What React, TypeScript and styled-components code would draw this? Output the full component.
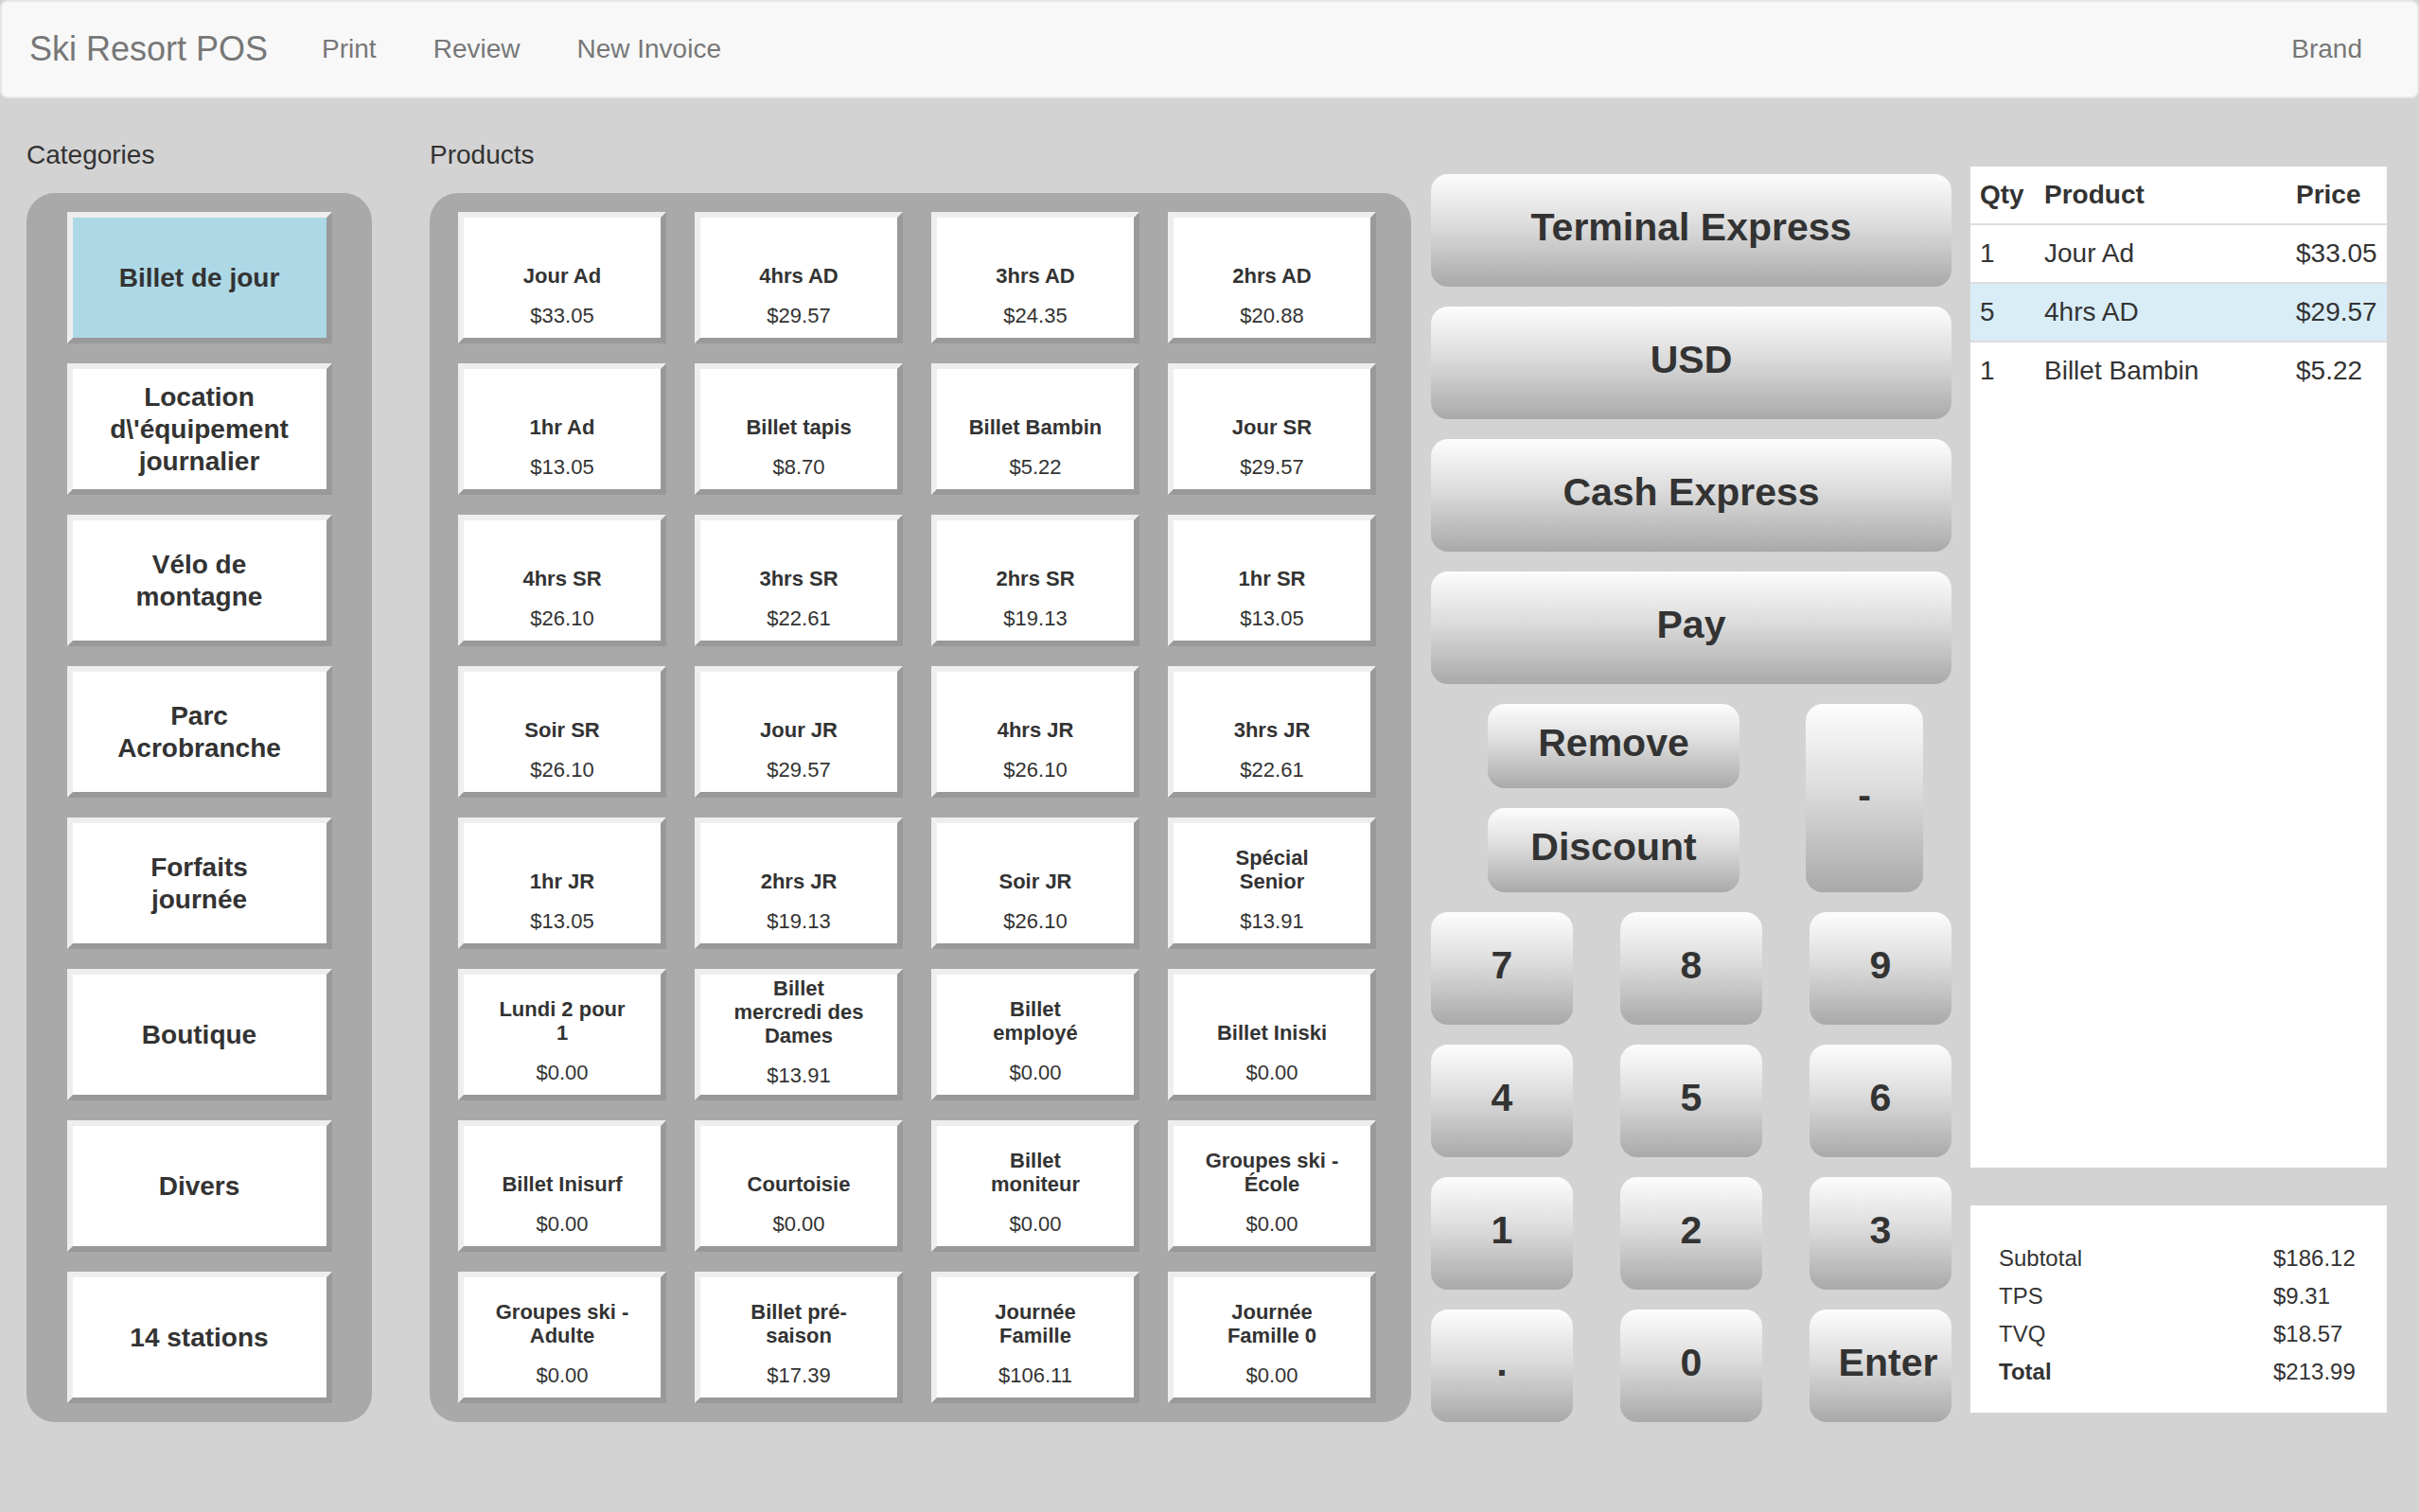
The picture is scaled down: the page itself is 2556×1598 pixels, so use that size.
import React from "react";
import styled, { createGlobalStyle } from "styled-components";

const GlobalStyle = createGlobalStyle`
  html, body {
    margin: 0;
    padding: 0;
    background: #d3d3d3;
    min-height: 100%;
  }
  body {
    font-family: "Liberation Sans", Arial, Helvetica, sans-serif;
    color: #333;
    font-size: 28px;
  }
  * {
    box-sizing: border-box;
  }
`;

const Page = styled.div`
  min-height: 1598px;
  background: #d3d3d3;
`;

const Navbar = styled.nav`
  display: flex;
  align-items: center;
  height: 104px;
  padding: 0 28px 0 29px;
  background: #f8f8f8;
  border: 2px solid #e7e7e7;
  border-radius: 8px;
`;

const Brand = styled.span`
  font-size: 36px;
  color: #777;
  margin-right: 27px;
`;

const NavLink = styled.span`
  font-size: 28px;
  color: #777;
  padding: 0 30px;
`;

const Spacer = styled.div`
  flex: 1;
`;

const Main = styled.div`
  display: flex;
  align-items: flex-start;
  margin-top: 40px;
  padding: 0 34px 0 28px;
`;

const Column = styled.div<{ $width: number; $gap: number; $top?: number }>`
  width: ${({ $width }) => $width}px;
  margin-left: ${({ $gap }) => $gap}px;
  padding-top: ${({ $top }) => $top ?? 0}px;
  flex-shrink: 0;
`;

const Label = styled.div`
  font-size: 28px;
  line-height: 40px;
  margin-bottom: 20px;
  color: #333;
`;

const Panel = styled.div<{ $cols: number }>`
  background: #a9a9a9;
  border-radius: 30px;
  display: grid;
  grid-template-columns: ${({ $cols }) =>
    $cols === 1 ? "280px" : `repeat(${$cols}, 220px)`};
  justify-content: ${({ $cols }) => ($cols === 1 ? "center" : "start")};
  column-gap: 30px;
  row-gap: 21px;
  padding: ${({ $cols }) => ($cols === 1 ? "20px 0" : "20px 37px 20px 30px")};
`;

const Tile = styled.div<{ $active?: boolean }>`
  height: 139px;
  border-style: solid;
  border-width: 6px;
  border-color: #eeeeee #999999 #999999 #eeeeee;
  background: ${({ $active }) => ($active ? "#add8e6" : "#ffffff")};
  font-weight: bold;
  color: #333;
  text-align: center;
`;

const CategoryTile = styled(Tile)`
  display: flex;
  align-items: center;
  justify-content: center;
  padding: 0 34px;
  font-size: 28px;
  line-height: 34px;
`;

const ProductTile = styled(Tile)`
  display: flex;
  flex-direction: column;
  padding: 2px 31px 0;
  font-size: 22px;
  line-height: 25px;
`;

const ProductName = styled.div`
  min-height: 72px;
  display: flex;
  align-items: flex-end;
  justify-content: center;
`;

const ProductPrice = styled.div`
  margin-top: 17px;
  font-weight: normal;
`;

const ActionStack = styled.div`
  display: flex;
  flex-direction: column;
  gap: 21px;
`;

const GrayButton = styled.div<{ $h: number; $w?: number }>`
  height: ${({ $h }) => $h}px;
  width: ${({ $w }) => ($w ? `${$w}px` : "auto")};
  border-radius: 18px;
  background: linear-gradient(to bottom, #fdfdfd 0%, #dcdcdc 45%, #a9a9a9 100%);
  display: flex;
  align-items: center;
  justify-content: center;
  padding-bottom: 6px;
  font-size: 41px;
  font-weight: bold;
  color: #333;
  white-space: nowrap;
`;

const EditRow = styled.div`
  display: flex;
  padding-left: 60px;
  gap: 70px;
`;

const EditPair = styled.div`
  display: flex;
  flex-direction: column;
  gap: 21px;
`;

const Keypad = styled.div`
  display: grid;
  grid-template-columns: repeat(3, 150px);
  column-gap: 50px;
  row-gap: 21px;
`;

const EnterLabel = styled.span`
  margin-left: 16px;
`;

const OrderBox = styled.div`
  background: #fff;
  height: 1058px;
`;

const Table = styled.table`
  width: 100%;
  border-collapse: separate;
  border-spacing: 0;
  font-size: 28px;
  line-height: 40px;
  color: #333;
`;

const Th = styled.th<{ $w?: number }>`
  text-align: left;
  padding: 10px;
  border-bottom: 2px solid #ddd;
  width: ${({ $w }) => ($w ? `${$w}px` : "auto")};
`;

const Row = styled.tr<{ $active?: boolean }>`
  background: ${({ $active }) => ($active ? "#d9edf7" : "transparent")};
`;

const Td = styled.td<{ $sep?: boolean }>`
  padding: 10px;
  border-top: ${({ $sep }) => ($sep ? "2px solid #ddd" : "none")};
`;

const TotalsBox = styled.div`
  margin-top: 40px;
  height: 219px;
  background: #fff;
  padding: 36px 30px 0;
  display: grid;
  grid-template-columns: 290px auto;
  grid-auto-rows: 40px;
  align-items: center;
  font-size: 24px;
  color: #333;
`;

const TotalLabel = styled.div<{ $bold?: boolean }>`
  font-weight: ${({ $bold }) => ($bold ? "bold" : "normal")};
`;

const categories = [
  "Billet de jour",
  "Location d\\'équipement journalier",
  "Vélo de montagne",
  "Parc Acrobranche",
  "Forfaits journée",
  "Boutique",
  "Divers",
  "14 stations",
];

const products: [string, string][] = [
  ["Jour Ad", "$33.05"],
  ["4hrs AD", "$29.57"],
  ["3hrs AD", "$24.35"],
  ["2hrs AD", "$20.88"],
  ["1hr Ad", "$13.05"],
  ["Billet tapis", "$8.70"],
  ["Billet Bambin", "$5.22"],
  ["Jour SR", "$29.57"],
  ["4hrs SR", "$26.10"],
  ["3hrs SR", "$22.61"],
  ["2hrs SR", "$19.13"],
  ["1hr SR", "$13.05"],
  ["Soir SR", "$26.10"],
  ["Jour JR", "$29.57"],
  ["4hrs JR", "$26.10"],
  ["3hrs JR", "$22.61"],
  ["1hr JR", "$13.05"],
  ["2hrs JR", "$19.13"],
  ["Soir JR", "$26.10"],
  ["Spécial Senior", "$13.91"],
  ["Lundi 2 pour 1", "$0.00"],
  ["Billet mercredi des Dames", "$13.91"],
  ["Billet employé", "$0.00"],
  ["Billet Iniski", "$0.00"],
  ["Billet Inisurf", "$0.00"],
  ["Courtoisie", "$0.00"],
  ["Billet moniteur", "$0.00"],
  ["Groupes ski - École", "$0.00"],
  ["Groupes ski - Adulte", "$0.00"],
  ["Billet pré-saison", "$17.39"],
  ["Journée Famille", "$106.11"],
  ["Journée Famille 0", "$0.00"],
];

const orderLines = [
  { qty: 1, name: "Jour Ad", price: "$33.05" },
  { qty: 5, name: "4hrs AD", price: "$29.57", active: true },
  { qty: 1, name: "Billet Bambin", price: "$5.22" },
];

const totals = [
  ["Subtotal", "$186.12"],
  ["TPS", "$9.31"],
  ["TVQ", "$18.57"],
  ["Total", "$213.99"],
];

const keys = ["7", "8", "9", "4", "5", "6", "1", "2", "3", ".", "0"];

export default function App() {
  return (
    <Page>
      <GlobalStyle />
      <Navbar>
        <Brand>Ski Resort POS</Brand>
        <NavLink>Print</NavLink>
        <NavLink>Review</NavLink>
        <NavLink>New Invoice</NavLink>
        <Spacer />
        <NavLink>Brand</NavLink>
      </Navbar>

      <Main>
        <Column $width={365} $gap={0}>
          <Label>Categories</Label>
          <Panel $cols={1}>
            {categories.map((c, i) => (
              <CategoryTile key={c} $active={i === 0}>
                {c}
              </CategoryTile>
            ))}
          </Panel>
        </Column>

        <Column $width={1037} $gap={61}>
          <Label>Products</Label>
          <Panel $cols={4}>
            {products.map(([name, price]) => (
              <ProductTile key={name}>
                <ProductName>{name}</ProductName>
                <ProductPrice>{price}</ProductPrice>
              </ProductTile>
            ))}
          </Panel>
        </Column>

        <Column $width={550} $gap={21} $top={40}>
          <ActionStack>
            <GrayButton $h={119}>Terminal Express</GrayButton>
            <GrayButton $h={119}>USD</GrayButton>
            <GrayButton $h={119}>Cash Express</GrayButton>
            <GrayButton $h={119}>Pay</GrayButton>
            <EditRow>
              <EditPair>
                <GrayButton $h={89} $w={266}>
                  Remove
                </GrayButton>
                <GrayButton $h={89} $w={266}>
                  Discount
                </GrayButton>
              </EditPair>
              <GrayButton $h={199} $w={124}>
                -
              </GrayButton>
            </EditRow>
            <Keypad>
              {keys.map((k) => (
                <GrayButton key={k} $h={119}>
                  {k}
                </GrayButton>
              ))}
              <GrayButton $h={119}>
                <EnterLabel>Enter</EnterLabel>
              </GrayButton>
            </Keypad>
          </ActionStack>
        </Column>

        <Column $width={440} $gap={20} $top={32}>
          <OrderBox>
            <Table>
              <thead>
                <tr>
                  <Th $w={68}>Qty</Th>
                  <Th>Product</Th>
                  <Th $w={106}>Price</Th>
                </tr>
              </thead>
              <tbody>
                {orderLines.map((l, i) => (
                  <Row key={l.name} $active={l.active}>
                    <Td $sep={i > 0}>{l.qty}</Td>
                    <Td $sep={i > 0}>{l.name}</Td>
                    <Td $sep={i > 0}>{l.price}</Td>
                  </Row>
                ))}
              </tbody>
            </Table>
          </OrderBox>
          <TotalsBox>
            {totals.map(([label, value]) => (
              <React.Fragment key={label}>
                <TotalLabel $bold={label === "Total"}>{label}</TotalLabel>
                <div>{value}</div>
              </React.Fragment>
            ))}
          </TotalsBox>
        </Column>
      </Main>
    </Page>
  );
}
